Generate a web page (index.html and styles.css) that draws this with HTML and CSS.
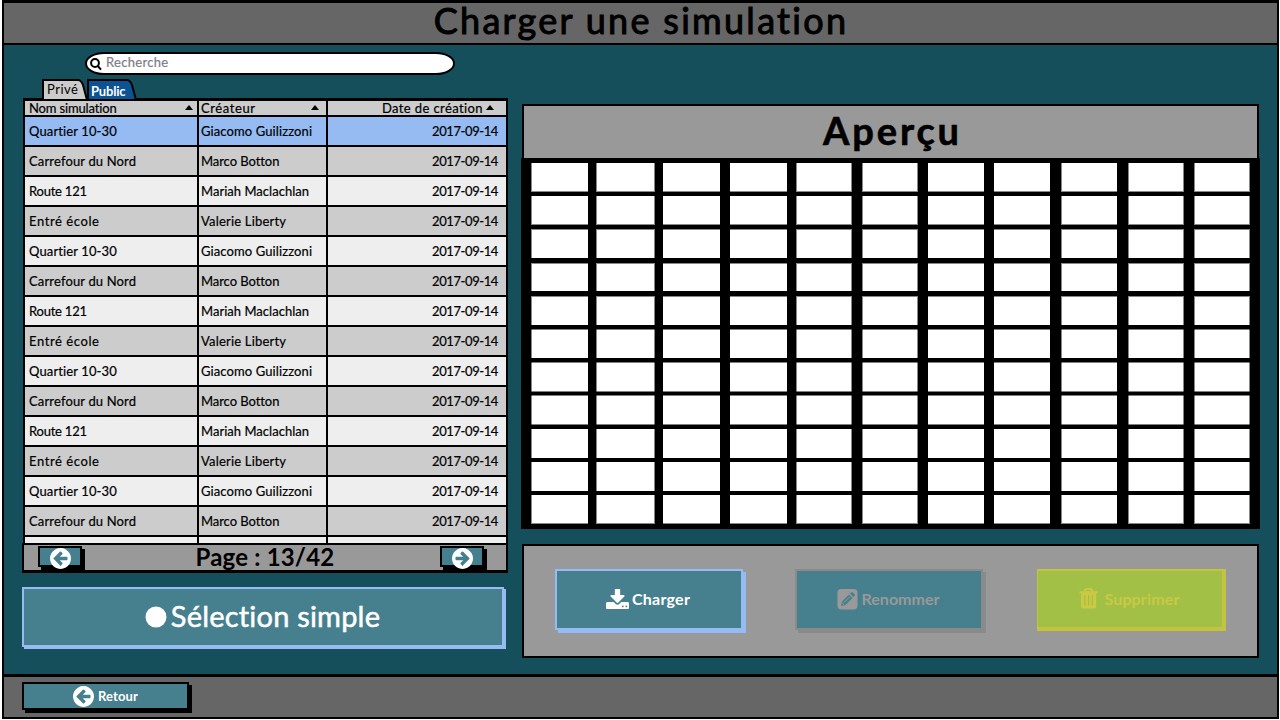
FILE: index.html
```
<!DOCTYPE html>
<html lang="fr">
<head>
<meta charset="utf-8">
<title>Charger une simulation</title>
<link rel="stylesheet" href="styles.css">
</head>
<body>
<svg class="defs" width="0" height="0">
  <symbol id="arrow" viewBox="0 0 1536 1536"><path d="M1280 832v-128q0-26-19-45t-45-19h-502l189-189q19-19 19-45t-19-45l-91-91q-18-18-45-18t-45 18l-362 362-91 91q-18 18-18 45t18 45l91 91 362 362q18 18 45 18t45-18l91-91q18-18 18-45t-18-45l-189-189h502q26 0 45-19t19-45zm256-64q0 209-103 385.500t-279.500 279.500-385.500 103-385.500-103-279.500-279.500-103-385.500 103-385.500 279.500-279.500 385.500-103 385.500 103 279.500 279.500 103 385.500z"/></symbol>
</svg>
<div class="screen">
  <header class="topbar"><h1>Charger une simulation</h1></header>
  <main class="main">
    <section class="left">
      <div class="search">
        <svg width="12" height="13" viewBox="0 0 12 13"><circle cx="5" cy="5" r="3.900"/><path d="M7.800 8L11 11.700"/></svg>
        <span>Recherche</span>
      </div>
      <nav class="tabs">
        <div class="tab"><svg width="46" height="20"><path d="M1 21V1H36Q39 1 41 6L45 21"/></svg><span>Privé</span></div>
        <div class="tab active"><svg width="50" height="20"><path d="M1 21V1H40Q43 1 45 6L49 21"/></svg><span>Public</span></div>
      </nav>
      <div class="table">
        <div class="row head"><div><span class="nom">Nom simulation</span><i></i></div><div><span class="cre">Créateur</span><i></i></div><div><span class="dat">Date de création</span><i></i></div></div>
        <div class="row selected"><div class="q">Quartier 10-30</div><div class="g">Giacomo Guilizzoni</div><div>2017-09-14</div></div>
        <div class="row alt"><div class="c">Carrefour du Nord</div><div class="m">Marco Botton</div><div>2017-09-14</div></div>
        <div class="row"><div class="r">Route 121</div><div class="h">Mariah Maclachlan</div><div>2017-09-14</div></div>
        <div class="row alt"><div class="e">Entré école</div><div class="v">Valerie Liberty</div><div>2017-09-14</div></div>
        <div class="row"><div class="q">Quartier 10-30</div><div class="g">Giacomo Guilizzoni</div><div>2017-09-14</div></div>
        <div class="row alt"><div class="c">Carrefour du Nord</div><div class="m">Marco Botton</div><div>2017-09-14</div></div>
        <div class="row"><div class="r">Route 121</div><div class="h">Mariah Maclachlan</div><div>2017-09-14</div></div>
        <div class="row alt"><div class="e">Entré école</div><div class="v">Valerie Liberty</div><div>2017-09-14</div></div>
        <div class="row"><div class="q">Quartier 10-30</div><div class="g">Giacomo Guilizzoni</div><div>2017-09-14</div></div>
        <div class="row alt"><div class="c">Carrefour du Nord</div><div class="m">Marco Botton</div><div>2017-09-14</div></div>
        <div class="row"><div class="r">Route 121</div><div class="h">Mariah Maclachlan</div><div>2017-09-14</div></div>
        <div class="row alt"><div class="e">Entré école</div><div class="v">Valerie Liberty</div><div>2017-09-14</div></div>
        <div class="row"><div class="q">Quartier 10-30</div><div class="g">Giacomo Guilizzoni</div><div>2017-09-14</div></div>
        <div class="row alt"><div class="c">Carrefour du Nord</div><div class="m">Marco Botton</div><div>2017-09-14</div></div>
        <div class="row last"><div></div><div></div><div></div></div>
      </div>
      <div class="pager">
        <div class="btn page"><svg class="ic" width="21" height="21"><use href="#arrow"/></svg></div>
        <b>Page : 13/42</b>
        <div class="btn page"><svg class="ic flip" width="21" height="21"><use href="#arrow"/></svg></div>
      </div>
      <div class="btn select"><svg width="22" height="22"><circle cx="11" cy="11" r="10.500" fill="#fff"/></svg><span>Sélection simple</span></div>
    </section>
    <section class="right">
      <div class="preview">
        <h2>Aperçu</h2>
        <svg width="739" height="371" viewBox="521 158 739 371">
          <path fill="#000" d="M521 158h739v371H521z"/>
          <path fill="#fff" d="M531 163h719v361H531z"/>
          <path fill="none" stroke="#888" stroke-width="1" d="M531.500 163V524M596.500 163V524M654.500 163V524M796.500 163V524M851.500 163V524M862.500 163V524M917.500 163V524M1061.500 163V524M1128.500 163V524M1183.500 163V524M1194.500 163V524M1249.500 163V524M531 191.500H1250M531 224.500H1250M531 229.500H1250M531 263.500H1250M531 296.500H1250M531 523.500H1250"/>
          <path fill="#000" d="M588 163h8v361h-8zM655 163h8v361h-8zM720 163h10v361h-10zM787 163h9v361h-9zM852 163h10v361h-10zM918 163h10v361h-10zM984 163h10v361h-10zM1050 163h11v361h-11zM1117 163h11v361h-11zM1184 163h10v361h-10z"/>
          <path fill="#000" d="M531 192h719v4H531zM531 225h719v4H531zM531 258h719v5H531zM531 291h719v5H531zM531 325h719v4.500H531zM531 358h719v4.500H531zM531 391.500h719v4H531zM531 424.500h719v4.500H531zM531 458h719v4H531zM531 491h719v4H531z"/>
        </svg>
      </div>
      <div class="actions">
        <div class="btn load">
          <svg width="23" height="21" viewBox="0 0 1664 1536" preserveAspectRatio="none"><path fill="#fff" transform="translate(0 -70)" d="M1280 1344q0-26-19-45t-45-19-45 19-19 45 19 45 45 19 45-19 19-45zm256 0q0-26-19-45t-45-19-45 19-19 45 19 45 45 19 45-19 19-45zm128-224v320q0 40-28 68t-68 28h-1472q-40 0-68-28t-28-68v-320q0-40 28-68t68-28h465l135 136q58 56 136 56t136-56l136-136h464q40 0 68 28t28 68zm-325-569q17 41-14 70l-448 448q-18 19-45 19t-45-19l-448-448q-31-29-14-70 17-39 59-39h256v-448q0-26 19-45t45-19h256q26 0 45 19t19 45v448h256q42 0 59 39z"/></svg>
          <span>Charger</span>
        </div>
        <div class="btn rename">
          <svg width="21" height="21"><rect x=".5" width="20" height="20.500" rx="4" fill="#999"/><path fill="#46808e" d="M4 17L5 12.500L12 5.500L15.500 9L8.500 16zM13 4.600L14.200 3.400Q15 2.800 15.800 3.500L17.500 5.200Q18.200 6 17.500 6.900L16.400 8z"/><path stroke="#999" d="M7 13.500L13 7.500M5.300 14L7 15.700"/></svg>
          <span>Renommer</span>
        </div>
        <div class="btn remove">
          <svg width="20" height="21"><g fill="none" stroke="#c9c943" stroke-width="2"><path d="M6 4V2.500Q6.200 1 7.500 1H11.500Q13 1 13.200 2.500V4"/><path d="M.5 4.200H18.500"/></g><path fill="#c9c943" d="M2 5H17.200V18Q17.200 20.500 15 20.500H4.200Q2 20.500 2 18z"/><path stroke="#a2c046" stroke-width="1.200" d="M5.900 7V17.500M9.600 7V17.500M13.300 7V17.500"/></svg>
          <span>Supprimer</span>
        </div>
      </div>
    </section>
  </main>
  <footer class="bottombar"><div class="btn back"><svg class="ic" width="21" height="21"><use href="#arrow"/></svg><span>Retour</span></div></footer>
</div>
</body>
</html>
```
FILE: styles.css
```
* { box-sizing: border-box; }
body { margin: 0; width: 1280px; height: 720px; overflow: hidden; background: #fff; font: 13px Lato, sans-serif; color: #000; }
.defs { position: absolute; }
svg { display: block; flex: none; }
h1, h2 { margin: 0; font-weight: 400; }
.screen { margin-left: 2px; width: 1277px; height: 719px; border: solid #000; border-width: 0 2px; display: grid; grid-template-rows: 45px 629px 45px; background: #154f5c; }
.topbar { background: #666; border: solid #000; border-width: 3px 0 2px; text-align: center; }
h1 { font-size: 36px; line-height: 35px; letter-spacing: 2.290px; -webkit-text-stroke: 1px #000; padding-left: 1px; }
.main { display: flex; gap: 13px; padding-left: 18px; }
.left { width: 486px; display: flex; flex-direction: column; }
.search { margin: 7px 0 0 63px; width: 370px; height: 23px; border: 2px solid #000; border-radius: 20px / 12px; background: #fff; display: flex; align-items: center; padding-left: 3px; color: #7c7c86; letter-spacing: .3px; gap: 4px; }
.search svg { fill: none; stroke: #000; stroke-width: 2; margin-top: 2px; }
.search span { margin-top: -3px; -webkit-text-stroke: .2px #7c7c86; }
.tabs { display: flex; margin: 4px 0 0 20px; height: 19px; }
.tab { position: relative; width: 45px; height: 19px; }
.tab svg { position: absolute; left: 0; top: 0; fill: #ccc; stroke: #000; stroke-width: 2; }
.tab span { position: relative; display: block; padding: 2px 0 0 5px; line-height: 16px; letter-spacing: .500px; }
.active { width: 50px; }
.active svg { fill: #0b5394; }
.active span { padding: 4px 0 0 4px; color: #fff; font-weight: 700; letter-spacing: -.200px; }
.table { height: 446px; width: 485px; margin-left: 1px; border: solid #000; border-width: 3px 2px 0; overflow: hidden; }
.row { display: grid; grid-template-columns: 173px 130px 1fr; height: 30px; background: #eee; border-bottom: 2px solid #000; line-height: 29px; -webkit-text-stroke: .2px #000; }
.row > div { height: 28px; padding-left: 4px; border-right: 2px solid #000; white-space: nowrap; }
.row > div:first-child { border-right-width: 1px; }
.row > div:nth-child(2) { border-left: 1px solid #000; padding-left: 2px; }
.row > div:last-child { text-align: right; padding-right: 8px; letter-spacing: -.400px; border: 0; }
.head { height: 16px; background: #ccc; line-height: 14px; }
.head > div { display: flex; align-items: center; justify-content: space-between; height: 14px; padding-right: 4px; }
.head > div:nth-child(2) { padding-right: 7px; }
.head > div:last-child { justify-content: flex-end; gap: 3px; padding-right: 12px; }
.head i { border: solid transparent; border-width: 0 4.500px 5px; border-bottom-color: #000; margin-bottom: 1px; }
.selected { background: #95bbf2; }
.alt { background: #ccc; }
.last { height: 8px; border: 0; }
.nom { letter-spacing: -.150px; } .cre { letter-spacing: .6px; } .dat { letter-spacing: .400px; }
.q { letter-spacing: .120px; } .c { letter-spacing: .150px; } .r { letter-spacing: -.220px; } .e { letter-spacing: .590px; }
.g { letter-spacing: .110px; } .m { letter-spacing: -.060px; } .h { letter-spacing: .030px; } .v { letter-spacing: .190px; }
.pager { height: 30px; margin-top: -1px; flex: none; border: 2px solid #000; border-width: 2px 2px 3px; background: #999; display: flex; justify-content: space-between; padding: 1px 22px 0 14px; }
.pager b { font-size: 24px; line-height: 22px; letter-spacing: .180px; padding-left: 8px; }
.btn { display: flex; align-items: center; justify-content: center; background: #46808e; color: #fff; border: 2px solid #000; box-shadow: 3px 3px 0 #000; }
.btn.page { width: 44px; height: 21px; }
.page .ic { margin-top: 3px; }
.ic { fill: #fff; overflow: visible; }
.flip { transform: scaleX(-1); }
.select { margin-top: 14px; width: 482px; height: 60px; flex: none; border-color: #95bbf2; box-shadow: 2px 2px 0 #95bbf2; gap: 4px; font-size: 29px; letter-spacing: .200px; }
.select svg { margin: -1px 0 0 -1px; }
.select span { margin-top: -4px; -webkit-text-stroke: .5px #fff; }
.right { padding-top: 59px; width: 739px; }
.preview h2 { height: 54px; border: solid #000; border-width: 2px 2px 0; margin-right: 1px; margin-left: 1px; background: #999; text-align: center; font: 700 38px/49px Lato, sans-serif; letter-spacing: 2.870px; padding-left: 4px; -webkit-text-stroke: .6px #000; }
.actions { margin: 15px 1px 0; height: 114px; border: 2px solid #000; background: #999; display: flex; padding: 23px 0 0 31px; font-size: 16px; font-weight: 700; }
.actions .btn { width: 188px; height: 61px; padding-right: 2px; }
.actions .btn span { margin-top: -2px; }
.actions svg { margin-top: -1px; }
.load { border-color: #95bbf2; box-shadow: 3px 3px 0 #95bbf2; gap: 3px; letter-spacing: .260px; }
.rename { margin-left: 52px; border-color: #8a8a8a; box-shadow: 3px 3px 0 #8a8a8a; color: #999; gap: 4px; letter-spacing: .020px; }
.actions .remove { margin-left: 54px; width: 189px; height: 62px; border-color: #c4c33f; border-width: 2px 4px 4px 1px; box-shadow: none; background: #a2c046; color: #c9c943; gap: 5px; letter-spacing: .150px; padding-right: 1px; }
.bottombar { background: #666; border: solid #000; border-width: 3px 0 2px; padding: 5px 0 0 18px; }
.back { width: 167px; height: 28px; gap: 4px; font-weight: 700; letter-spacing: .150px; }
```
